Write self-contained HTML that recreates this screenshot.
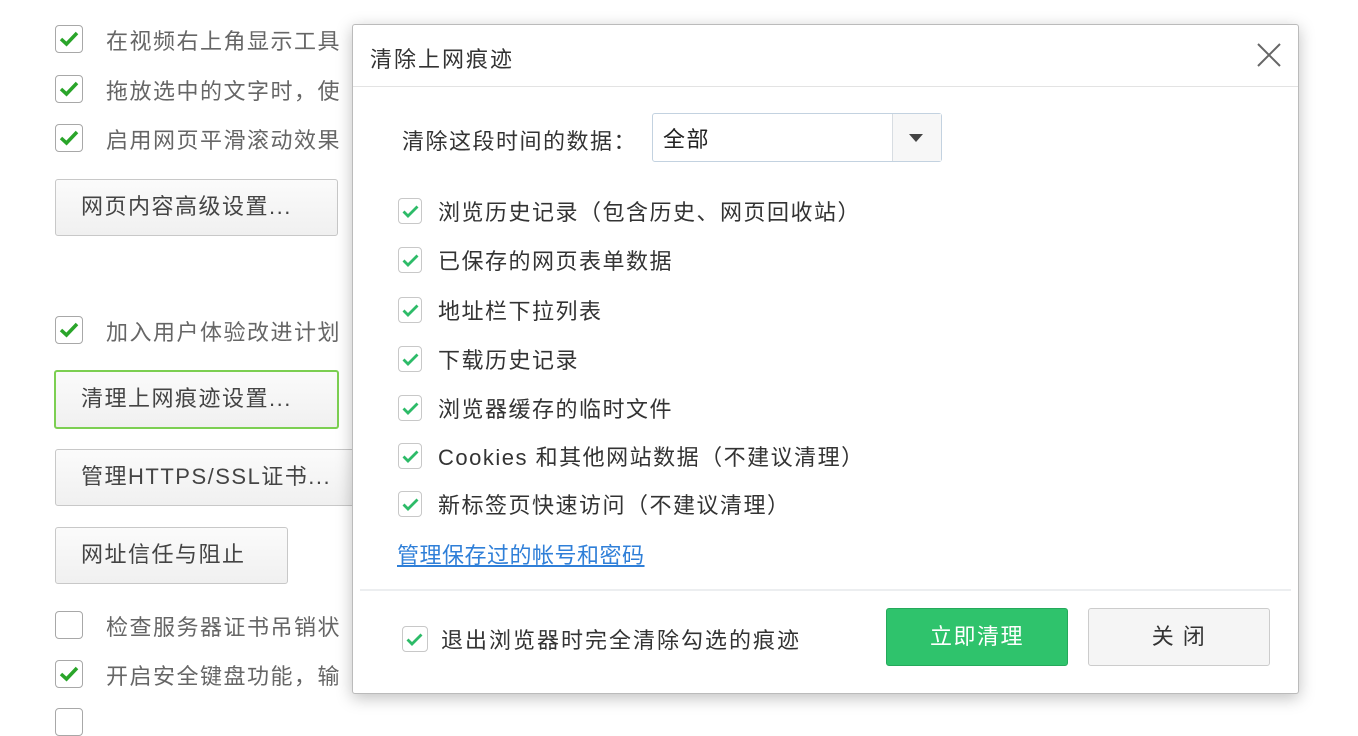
<!DOCTYPE html>
<html><head><meta charset="utf-8"><style>
*{box-sizing:border-box;margin:0;padding:0}
body{width:1358px;height:714px;overflow:hidden;background:#fff;font-family:"Liberation Sans","Noto Sans CJK SC",sans-serif;position:relative;color:#333;letter-spacing:1.5px}
.a{position:absolute;white-space:nowrap}
.bg{color:#666;font-size:22px}
.cb{position:absolute;width:28px;height:28px;border:1.5px solid #a8a8a8;border-radius:4px;background:#fff}
.cb svg{position:absolute;left:3px;top:4px}
.btn{position:absolute;border:1px solid #c8c8c8;border-radius:3px;background:linear-gradient(#fbfbfb,#f0f0f0);font-size:22px;color:#444;padding-left:25px;line-height:54px;white-space:nowrap;overflow:hidden}
.dcb{position:absolute;width:24px;height:26px;border:1px solid #c8c8c8;border-radius:4px;background:#fff}
.dcb svg{position:absolute;left:3px;top:5px}
.dt{position:absolute;font-size:22px;color:#333;left:438px;white-space:nowrap}
</style></head><body>
<div class="cb" style="left:55px;top:25px"><svg width="20" height="18" viewBox="0 0 20 18"><path d="M2 9 L7.5 14 L18 3" fill="none" stroke="#2aa52a" stroke-width="3.5"/></svg></div>
<div class="a bg" style="left:106px;top:24px">在视频右上角显示工具</div>
<div class="cb" style="left:55px;top:75px"><svg width="20" height="18" viewBox="0 0 20 18"><path d="M2 9 L7.5 14 L18 3" fill="none" stroke="#2aa52a" stroke-width="3.5"/></svg></div>
<div class="a bg" style="left:106px;top:74px">拖放选中的文字时，使</div>
<div class="cb" style="left:55px;top:124px"><svg width="20" height="18" viewBox="0 0 20 18"><path d="M2 9 L7.5 14 L18 3" fill="none" stroke="#2aa52a" stroke-width="3.5"/></svg></div>
<div class="a bg" style="left:106px;top:123px">启用网页平滑滚动效果</div>
<div class="btn" style="left:55px;top:179px;width:283px;height:57px">网页内容高级设置...</div>
<div class="cb" style="left:55px;top:316px"><svg width="20" height="18" viewBox="0 0 20 18"><path d="M2 9 L7.5 14 L18 3" fill="none" stroke="#2aa52a" stroke-width="3.5"/></svg></div>
<div class="a bg" style="left:106px;top:315px">加入用户体验改进计划</div>
<div class="btn" style="left:54px;top:370px;width:285px;height:59px;border:2px solid #7ccf52">清理上网痕迹设置...</div>
<div class="btn" style="left:55px;top:449px;width:310px;height:57px">管理HTTPS/SSL证书...</div>
<div class="btn" style="left:55px;top:527px;width:233px;height:57px">网址信任与阻止</div>
<div class="cb" style="left:55px;top:611px"></div>
<div class="a bg" style="left:106px;top:610px">检查服务器证书吊销状</div>
<div class="cb" style="left:55px;top:660px"><svg width="20" height="18" viewBox="0 0 20 18"><path d="M2 9 L7.5 14 L18 3" fill="none" stroke="#2aa52a" stroke-width="3.5"/></svg></div>
<div class="a bg" style="left:106px;top:659px">开启安全键盘功能，输</div>
<div class="cb" style="left:55px;top:708px"></div>

<div class="a" style="left:352px;top:24px;width:947px;height:670px;background:#fff;border:1px solid #bbb;border-radius:3px;box-shadow:0 4px 16px rgba(0,0,0,.25)">
  <div class="a" style="left:17px;top:17px;font-size:22px;color:#333;letter-spacing:2px">清除上网痕迹</div>
  <svg class="a" style="left:903px;top:17px" width="26" height="26" viewBox="0 0 26 26"><path d="M2 2L24 24M24 2L2 24" stroke="#666" stroke-width="2"/></svg>
  <div class="a" style="left:0;top:61px;width:945px;height:1px;background:#e3e3e3"></div>
  <div class="a" style="left:7px;top:564px;width:931px;height:2px;background:#eceef0"></div>
</div>
<div class="a" style="left:402px;top:124px;font-size:22px;color:#333">清除这段时间的数据：</div>
<div class="a" style="left:652px;top:113px;width:290px;height:49px;border:1px solid #c3d2e0;border-radius:3px;background:#fff">
  <div class="a" style="left:10px;top:8px;font-size:22px;color:#222">全部</div>
  <div class="a" style="left:239px;top:0;width:49px;height:47px;border-left:1px solid #d8dde2;background:#f7f7f7"></div>
  <svg class="a" style="left:256px;top:20px" width="14" height="8"><path d="M0 0H14L7 8Z" fill="#444"/></svg>
</div>
<div class="dcb" style="left:398px;top:198px"><svg width="17" height="15" viewBox="0 0 17 15"><path d="M1.5 7.5 L6 12 L15.5 2.5" fill="none" stroke="#2dbb68" stroke-width="2.8"/></svg></div>
<div class="dt" style="top:195px">浏览历史记录（包含历史、网页回收站）</div>
<div class="dcb" style="left:398px;top:247px"><svg width="17" height="15" viewBox="0 0 17 15"><path d="M1.5 7.5 L6 12 L15.5 2.5" fill="none" stroke="#2dbb68" stroke-width="2.8"/></svg></div>
<div class="dt" style="top:244px">已保存的网页表单数据</div>
<div class="dcb" style="left:398px;top:297px"><svg width="17" height="15" viewBox="0 0 17 15"><path d="M1.5 7.5 L6 12 L15.5 2.5" fill="none" stroke="#2dbb68" stroke-width="2.8"/></svg></div>
<div class="dt" style="top:294px">地址栏下拉列表</div>
<div class="dcb" style="left:398px;top:346px"><svg width="17" height="15" viewBox="0 0 17 15"><path d="M1.5 7.5 L6 12 L15.5 2.5" fill="none" stroke="#2dbb68" stroke-width="2.8"/></svg></div>
<div class="dt" style="top:343px">下载历史记录</div>
<div class="dcb" style="left:398px;top:395px"><svg width="17" height="15" viewBox="0 0 17 15"><path d="M1.5 7.5 L6 12 L15.5 2.5" fill="none" stroke="#2dbb68" stroke-width="2.8"/></svg></div>
<div class="dt" style="top:392px">浏览器缓存的临时文件</div>
<div class="dcb" style="left:398px;top:443px"><svg width="17" height="15" viewBox="0 0 17 15"><path d="M1.5 7.5 L6 12 L15.5 2.5" fill="none" stroke="#2dbb68" stroke-width="2.8"/></svg></div>
<div class="dt" style="top:440px">Cookies 和其他网站数据（不建议清理）</div>
<div class="dcb" style="left:398px;top:491px"><svg width="17" height="15" viewBox="0 0 17 15"><path d="M1.5 7.5 L6 12 L15.5 2.5" fill="none" stroke="#2dbb68" stroke-width="2.8"/></svg></div>
<div class="dt" style="top:488px">新标签页快速访问（不建议清理）</div>
<div class="a" style="left:397px;top:538px;font-size:22px;color:#2f7fd8;text-decoration:underline;letter-spacing:0.5px">管理保存过的帐号和密码</div>
<div class="dcb" style="left:402px;top:626px;width:26px"><svg width="17" height="15" viewBox="0 0 17 15"><path d="M1.5 7.5 L6 12 L15.5 2.5" fill="none" stroke="#2dbb68" stroke-width="2.8"/></svg></div>
<div class="a" style="left:441px;top:623px;font-size:22px;color:#333;letter-spacing:2px">退出浏览器时完全清除勾选的痕迹</div>
<div class="a" style="left:886px;top:608px;width:182px;height:58px;background:#2fc36c;border:1px solid #25a95b;border-radius:3px;color:#fff;font-size:22px;text-align:center;line-height:56px">立即清理</div>
<div class="a" style="left:1088px;top:608px;width:182px;height:58px;background:#f5f5f5;border:1px solid #ccc;border-radius:3px;color:#333;font-size:22px;text-align:center;line-height:56px">关 闭</div>
</body></html>
